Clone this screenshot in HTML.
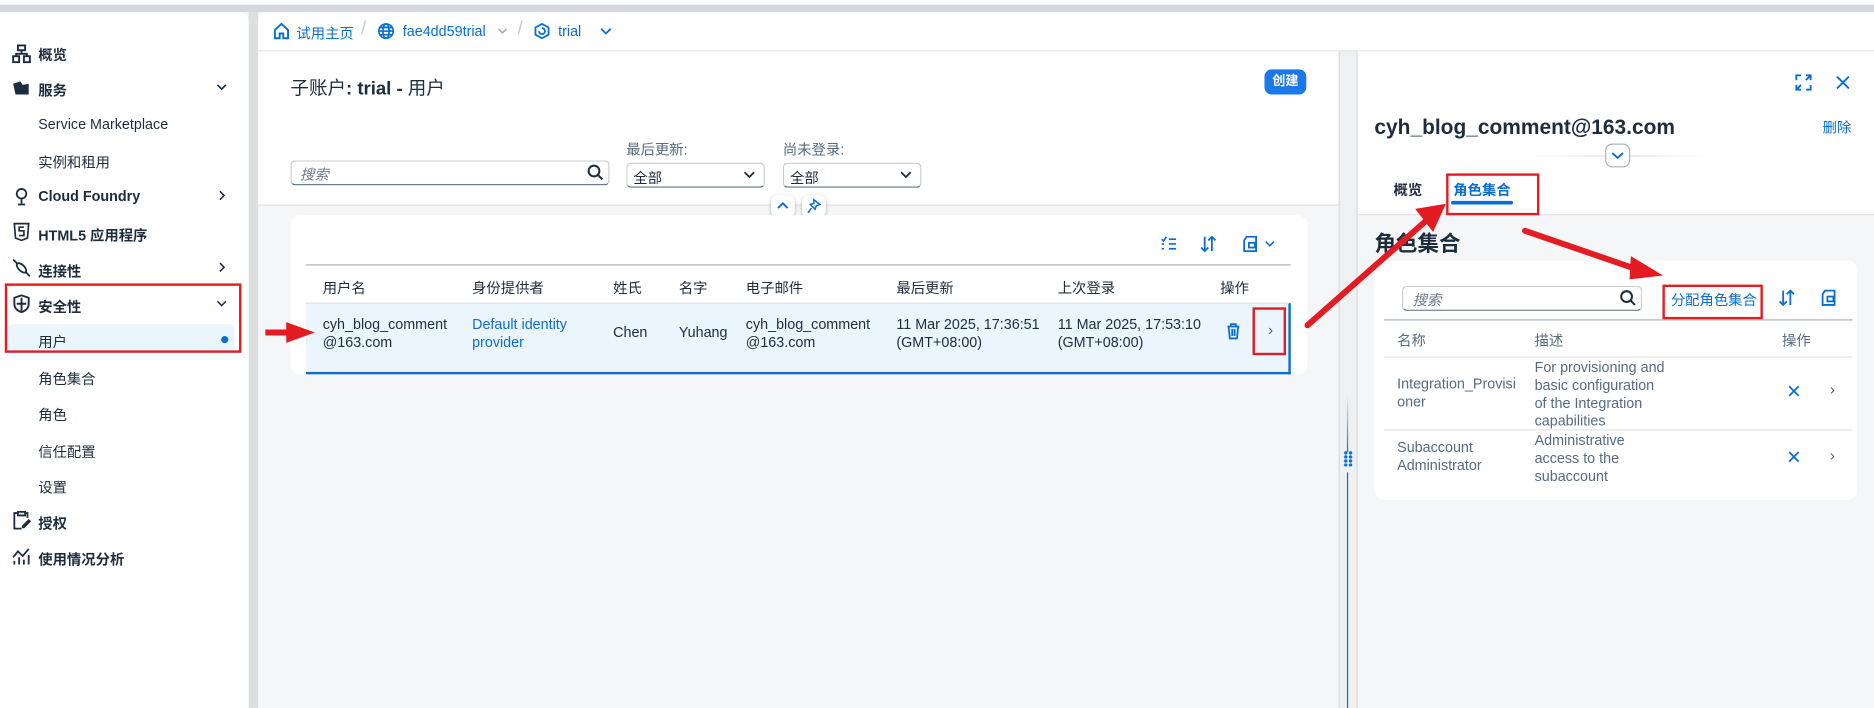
<!DOCTYPE html>
<html><head><meta charset="utf-8"><style>
*{box-sizing:border-box;margin:0;padding:0}
html,body{width:1874px;height:708px;overflow:hidden;background:#f5f6f7}
#w{position:absolute;left:0;top:0;width:1568px;height:592px;transform:scale(1.19515,1.1959);transform-origin:0 0;font-family:"Liberation Sans","Noto Sans CJK SC",sans-serif;font-size:12px;color:#1d2d3e}
.a{position:absolute;white-space:nowrap}
.b{color:#0a6ed1}
.ic{position:absolute}
</style></head><body><div id="w">
<div class="a" style="left:0;top:0;width:1568px;height:4px;background:#fff"></div>
<div class="a" style="left:0;top:4px;width:1568px;height:6px;background:#d5d7da"></div>
<div class="a" style="left:208px;top:10px;width:8px;height:582px;background:#dcdee0"></div>
<!-- sidebar -->
<div class="a" style="left:0;top:10px;width:208px;height:582px;background:#fff;border-top-right-radius:8px"></div>
<svg class="ic" style="left:10px;top:37px" width="16" height="16" viewBox="0 0 16 16" fill="none" stroke="#1d2d3e" stroke-width="1.6"><rect x="5" y="1" width="6" height="4"/><rect x="1" y="10" width="5" height="5"/><rect x="10" y="10" width="5" height="5"/><path d="M8 5v3M3.5 10V8h9v2"/></svg>
<div class="a" style="left:32px;top:37px;font-weight:bold">概览</div>
<svg class="ic" style="left:10px;top:66px" width="16" height="16" viewBox="0 0 16 16"><path d="M1 4l6-2 2 3 5-1v9H3z" fill="#1d2d3e"/></svg>
<div class="a" style="left:32px;top:67px;font-weight:bold">服务</div>
<svg class="ic" style="left:181px;top:70px" width="9" height="6" viewBox="0 0 9 6" fill="none" stroke="#1d2d3e" stroke-width="1.3"><path d="M1 1l3.5 3.5L8 1"/></svg>
<div class="a" style="left:32px;top:97px">Service Marketplace</div>
<div class="a" style="left:32px;top:127px">实例和租用</div>
<svg class="ic" style="left:10px;top:156px" width="16" height="16" viewBox="0 0 16 16" fill="none" stroke="#1d2d3e" stroke-width="1.5"><circle cx="8" cy="6" r="4"/><path d="M8 10v5M5 15h6"/></svg>
<div class="a" style="left:32px;top:157px;font-weight:bold">Cloud Foundry</div>
<svg class="ic" style="left:183px;top:159px" width="6" height="9" viewBox="0 0 6 9" fill="none" stroke="#1d2d3e" stroke-width="1.3"><path d="M1 1l3.5 3.5L1 8"/></svg>
<svg class="ic" style="left:10px;top:186px" width="16" height="16" viewBox="0 0 16 16" fill="none" stroke="#1d2d3e" stroke-width="1.4"><path d="M2 1h12l-1 12-5 2-5-2z"/><path d="M10 4H6v3h4v4H6"/></svg>
<div class="a" style="left:32px;top:188px;font-weight:bold">HTML5 应用程序</div>
<svg class="ic" style="left:10px;top:216px" width="16" height="16" viewBox="0 0 16 16" fill="none" stroke="#1d2d3e" stroke-width="1.5"><path d="M1 1l4 4M15 15l-4-4"/><ellipse cx="8" cy="8" rx="2.5" ry="5" transform="rotate(-45 8 8)"/></svg>
<div class="a" style="left:32px;top:218px;font-weight:bold">连接性</div>
<svg class="ic" style="left:183px;top:219px" width="6" height="9" viewBox="0 0 6 9" fill="none" stroke="#1d2d3e" stroke-width="1.3"><path d="M1 1l3.5 3.5L1 8"/></svg>
<svg class="ic" style="left:10px;top:246px" width="16" height="16" viewBox="0 0 16 16" fill="none" stroke="#1d2d3e" stroke-width="1.6"><path d="M8 1l6 2v5c0 4-3 6-6 7-3-1-6-3-6-7V3z M8 3v11M4 8h8"/></svg>
<div class="a" style="left:32px;top:248px;font-weight:bold">安全性</div>
<svg class="ic" style="left:181px;top:251px" width="9" height="6" viewBox="0 0 9 6" fill="none" stroke="#1d2d3e" stroke-width="1.3"><path d="M1 1l3.5 3.5L8 1"/></svg>
<div class="a" style="left:6px;top:271px;width:190px;height:24px;background:#ebf5fe;border-radius:4px"></div>
<div class="a" style="left:32px;top:277px">用户</div>
<div class="a" style="left:185px;top:281px;width:6px;height:6px;border-radius:3px;background:#0a6ed1"></div>
<div class="a" style="left:4px;top:237px;width:198px;height:58px;border:2px solid #e31b23"></div>
<div class="a" style="left:32px;top:308px">角色集合</div>
<div class="a" style="left:32px;top:338px">角色</div>
<div class="a" style="left:32px;top:369px">信任配置</div>
<div class="a" style="left:32px;top:399px">设置</div>
<svg class="ic" style="left:10px;top:427px" width="16" height="16" viewBox="0 0 16 16" fill="none" stroke="#1d2d3e" stroke-width="1.5"><path d="M5 2H2v13h6M11 2h2v4M5 1h6v3H5z M9 13l5-5 1 1-5 5H9z"/></svg>
<div class="a" style="left:32px;top:429px;font-weight:bold">授权</div>
<svg class="ic" style="left:10px;top:457px" width="16" height="16" viewBox="0 0 16 16" fill="none" stroke="#1d2d3e" stroke-width="1.5"><path d="M1 9l4-5 4 4 5-6M2 12v3M6 9v6M10 11v4M14 7v8"/></svg>
<div class="a" style="left:32px;top:459px;font-weight:bold">使用情况分析</div>

<!-- breadcrumb -->
<div class="a" style="left:216px;top:10px;width:1352px;height:33px;background:#fff;border-bottom:1px solid #e0e2e4;border-top-left-radius:8px"></div>
<svg class="ic" style="left:229px;top:19px" width="13" height="14" viewBox="0 0 13 14" fill="none" stroke="#0a6ed1" stroke-width="1.6"><path d="M1 13V6l5.5-5 5.5 5v7H8V9H5v4z"/></svg>
<div class="a b" style="left:248px;top:19px">试用主页</div>
<div class="a" style="left:302px;top:16px;color:#c5c8cc;font-size:16px">/</div>
<svg class="ic" style="left:316px;top:19px" width="14" height="14" viewBox="0 0 14 14" fill="none" stroke="#0a6ed1" stroke-width="1.4"><circle cx="7" cy="7" r="6"/><ellipse cx="7" cy="7" rx="2.6" ry="6"/><path d="M1 7h12M2 4h10M2 10h10"/></svg>
<div class="a b" style="left:337px;top:19px">fae4dd59trial</div>
<svg class="ic" style="left:416px;top:23px" width="9" height="6" viewBox="0 0 9 6" fill="none" stroke="#a0a8b0" stroke-width="1.2"><path d="M1 1l3.5 3.5L8 1"/></svg>
<div class="a" style="left:433px;top:16px;color:#c5c8cc;font-size:16px">/</div>
<svg class="ic" style="left:447px;top:19px" width="13" height="14" viewBox="0 0 13 14" fill="none" stroke="#0a6ed1" stroke-width="1.5"><path d="M6.5 1l5.5 3v6l-5.5 3L1 10V4z"/><path d="M4 7a2.5 2.5 0 1 0 2.5-2.5"/></svg>
<div class="a b" style="left:467px;top:19px">trial</div>
<svg class="ic" style="left:502px;top:23px" width="10" height="7" viewBox="0 0 10 7" fill="none" stroke="#0a6ed1" stroke-width="1.5"><path d="M1 1l4 4 4-4"/></svg>

<!-- main header -->
<div class="a" style="left:216px;top:43px;width:904px;height:129px;background:#fff;border-bottom:1px solid #e0e2e4"></div>
<div class="a" style="left:243px;top:62px;font-size:15.5px">子账户<b>: trial -</b> 用户</div>
<div class="a" style="left:1058px;top:58px;width:35px;height:21px;background:#1b78e8;border-radius:6px;color:#fff;font-size:11px;text-align:center;line-height:21px;font-weight:bold">创建</div>
<div class="a" style="left:243px;top:134px;width:267px;height:21px;border:1px solid #c8ccd0;border-bottom:1px solid #556b82;border-radius:4px;background:#fff"></div>
<div class="a" style="left:251px;top:137px;color:#6a7a8c;font-style:italic">搜索</div>
<svg class="ic" style="left:491px;top:137px" width="14" height="14" viewBox="0 0 14 14" fill="none" stroke="#1d2d3e" stroke-width="1.7"><circle cx="6" cy="6" r="4.5"/><path d="M9.5 9.5l3.5 3.5"/></svg>
<div class="a" style="left:524px;top:116px;color:#556b82">最后更新:</div>
<div class="a" style="left:655px;top:116px;color:#556b82">尚未登录:</div>
<div class="a" style="left:524px;top:136px;width:116px;height:21px;border:1px solid #c8ccd0;border-bottom:1px solid #556b82;border-radius:4px;background:#fff"></div>
<div class="a" style="left:530px;top:140px">全部</div>
<svg class="ic" style="left:622px;top:143px" width="10" height="7" viewBox="0 0 10 7" fill="none" stroke="#1d2d3e" stroke-width="1.5"><path d="M1 1l4 4 4-4"/></svg>
<div class="a" style="left:655px;top:136px;width:116px;height:21px;border:1px solid #c8ccd0;border-bottom:1px solid #556b82;border-radius:4px;background:#fff"></div>
<div class="a" style="left:661px;top:140px">全部</div>
<svg class="ic" style="left:753px;top:143px" width="10" height="7" viewBox="0 0 10 7" fill="none" stroke="#1d2d3e" stroke-width="1.5"><path d="M1 1l4 4 4-4"/></svg>
<div class="a" style="left:645px;top:163px;width:20px;height:19px;background:#fff;border-radius:6px;box-shadow:0 1px 3px rgba(0,0,0,.3)"></div>
<svg class="ic" style="left:650px;top:168px" width="10" height="8" viewBox="0 0 10 8" fill="none" stroke="#0a6ed1" stroke-width="1.6"><path d="M1 6l4-4 4 4"/></svg>
<div class="a" style="left:671px;top:163px;width:20px;height:19px;background:#fff;border-radius:6px;box-shadow:0 1px 3px rgba(0,0,0,.3)"></div>
<svg class="ic" style="left:675px;top:166px" width="12" height="13" viewBox="0 0 12 13" fill="none" stroke="#0a6ed1" stroke-width="1.3"><path d="M6 1l5 4-3 1-1 3-4-4 3-1z M4 8l-3 4"/></svg>

<!-- table card -->
<div class="a" style="left:243px;top:180px;width:851px;height:133px;background:#fff;border-radius:8px"></div>
<svg class="ic" style="left:971px;top:197px" width="14" height="14" viewBox="0 0 14 14" fill="none" stroke="#0a6ed1" stroke-width="1.4"><path d="M1 3l1.5 1.5L5 1M7 3h6M1 7h2M7 7h6M1 11h2M7 11h6"/></svg>
<svg class="ic" style="left:1004px;top:197px" width="14" height="14" viewBox="0 0 14 14" fill="none" stroke="#0a6ed1" stroke-width="1.5"><path d="M4 1v12M1 10l3 3 3-3M10 13V1M7 4l3-3 3 3"/></svg>
<svg class="ic" style="left:1038px;top:197px" width="14" height="14" viewBox="0 0 14 14" fill="none" stroke="#0a6ed1" stroke-width="1.5"><path d="M5 1h8v12H3V4z"/><rect x="7" y="6" width="5" height="4"/></svg>
<svg class="ic" style="left:1058px;top:201px" width="9" height="6" viewBox="0 0 9 6" fill="none" stroke="#0a6ed1" stroke-width="1.3"><path d="M1 1l3.5 3.5L8 1"/></svg>
<div class="a" style="left:256px;top:221px;width:824px;height:1px;background:#a9b4be"></div>
<div class="a" style="left:270px;top:232px">用户名</div>
<div class="a" style="left:395px;top:232px">身份提供者</div>
<div class="a" style="left:513px;top:232px">姓氏</div>
<div class="a" style="left:568px;top:232px">名字</div>
<div class="a" style="left:624px;top:232px">电子邮件</div>
<div class="a" style="left:750px;top:232px">最后更新</div>
<div class="a" style="left:885px;top:232px">上次登录</div>
<div class="a" style="left:1021px;top:232px">操作</div>
<div class="a" style="left:256px;top:253px;width:824px;height:60px;background:#eaf5fe;border-top:1px solid #e0e2e4;border-bottom:2px solid #0a6ed1;border-right:2px solid #0a6ed1"></div>
<div class="a" style="left:270px;top:264px;line-height:15px">cyh_blog_comment<br>@163.com</div>
<div class="a b" style="left:395px;top:264px;line-height:15px">Default identity<br>provider</div>
<div class="a" style="left:513px;top:271px">Chen</div>
<div class="a" style="left:568px;top:271px">Yuhang</div>
<div class="a" style="left:624px;top:264px;line-height:15px">cyh_blog_comment<br>@163.com</div>
<div class="a" style="left:750px;top:264px;line-height:15px">11 Mar 2025, 17:36:51<br>(GMT+08:00)</div>
<div class="a" style="left:885px;top:264px;line-height:15px">11 Mar 2025, 17:53:10<br>(GMT+08:00)</div>
<svg class="ic" style="left:1026px;top:270px" width="12" height="14" viewBox="0 0 12 14" fill="none" stroke="#0a6ed1" stroke-width="1.5"><path d="M1 3h10M4 3V1h4v2M2 3l1 10h6l1-10M5 5v6M7 5v6"/></svg>
<div class="a" style="left:1061px;top:268px;color:#556b82;font-size:13px">›</div>
<div class="a" style="left:1048px;top:257px;width:28px;height:40px;border:2px solid #e31b23"></div>

<!-- divider -->
<div class="a" style="left:1120px;top:43px;width:16px;height:549px;background:#eef0f2;border-left:1px solid #d8dadc;border-right:1px solid #d8dadc"></div>
<div class="a" style="left:1127px;top:330px;width:1px;height:48px;background:linear-gradient(#eef0f2,#0a6ed1)"></div>
<div class="a" style="left:1124px;top:377px;width:8px;height:13px;background:radial-gradient(circle,#0a6ed1 1.3px,transparent 1.6px) 0 0/4px 3.4px"></div>
<div class="a" style="left:1127px;top:395px;width:1px;height:197px;background:#0a6ed1"></div>

<!-- right panel -->
<div class="a" style="left:1136px;top:43px;width:432px;height:137px;background:#fff;border-bottom:1px solid #e0e2e4"></div>
<svg class="ic" style="left:1502px;top:62px" width="14" height="14" viewBox="0 0 14 14" fill="none" stroke="#0a6ed1" stroke-width="1.6"><path d="M1 5V1h4M9 1h4v4M13 9v4H9M5 13H1V9M9 5l4-4M5 9l-4 4"/></svg>
<svg class="ic" style="left:1536px;top:63px" width="12" height="12" viewBox="0 0 12 12" stroke="#0a6ed1" stroke-width="1.6"><path d="M1 1l10 10M11 1L1 11"/></svg>
<div class="a" style="left:1150px;top:96px;font-size:17.5px;font-weight:bold">cyh_blog_comment@163.com</div>
<div class="a b" style="left:1525px;top:98px">删除</div>
<div class="a" style="left:1280px;top:130px;width:150px;height:1px;background:linear-gradient(90deg,transparent,#d8dadc,transparent)"></div>
<div class="a" style="left:1343px;top:120px;width:21px;height:20px;background:#fff;border:1px solid #a9b4be;border-radius:6px"></div>
<svg class="ic" style="left:1348px;top:126px" width="11" height="8" viewBox="0 0 11 8" fill="none" stroke="#0a6ed1" stroke-width="1.6"><path d="M1 2l4.5 4L10 2"/></svg>
<div class="a" style="left:1166px;top:150px;font-weight:bold;color:#1d2d3e">概览</div>
<div class="a b" style="left:1216px;top:150px;font-weight:bold">角色集合</div>
<div class="a" style="left:1214px;top:168px;width:52px;height:3px;background:#0a6ed1;border-radius:2px"></div>
<div class="a" style="left:1210px;top:145px;width:78px;height:35px;border:2px solid #e31b23"></div>
<div class="a" style="left:1150px;top:190px;font-size:18px;font-weight:bold">角色集合</div>
<div class="a" style="left:1150px;top:218px;width:404px;height:200px;background:#fff;border-radius:8px"></div>
<div class="a" style="left:1173px;top:239px;width:201px;height:21px;border:1px solid #c8ccd0;border-bottom:1px solid #556b82;border-radius:4px;background:#fff"></div>
<div class="a" style="left:1182px;top:242px;color:#6a7a8c;font-style:italic">搜索</div>
<svg class="ic" style="left:1355px;top:242px" width="14" height="14" viewBox="0 0 14 14" fill="none" stroke="#1d2d3e" stroke-width="1.7"><circle cx="6" cy="6" r="4.5"/><path d="M9.5 9.5l3.5 3.5"/></svg>
<div class="a b" style="left:1398px;top:242px">分配角色集合</div>
<div class="a" style="left:1391px;top:238px;width:84px;height:29px;border:2px solid #e31b23"></div>
<svg class="ic" style="left:1488px;top:242px" width="14" height="14" viewBox="0 0 14 14" fill="none" stroke="#0a6ed1" stroke-width="1.5"><path d="M4 1v12M1 10l3 3 3-3M10 13V1M7 4l3-3 3 3"/></svg>
<svg class="ic" style="left:1522px;top:242px" width="14" height="14" viewBox="0 0 14 14" fill="none" stroke="#0a6ed1" stroke-width="1.5"><path d="M5 1h8v12H3V4z"/><rect x="7" y="6" width="5" height="4"/></svg>
<div class="a" style="left:1158px;top:267px;width:392px;height:1px;background:#a9b4be"></div>
<div class="a" style="left:1169px;top:276px;color:#556b82">名称</div>
<div class="a" style="left:1284px;top:276px;color:#556b82">描述</div>
<div class="a" style="left:1491px;top:276px;color:#556b82">操作</div>
<div class="a" style="left:1158px;top:298px;width:392px;height:1px;background:#e0e2e4"></div>
<div class="a" style="left:1169px;top:314px;line-height:15px;color:#556b82">Integration_Provisi<br>oner</div>
<div class="a" style="left:1284px;top:300px;line-height:15px;color:#556b82">For provisioning and<br>basic configuration<br>of the Integration<br>capabilities</div>
<svg class="ic" style="left:1496px;top:322px" width="10" height="10" viewBox="0 0 10 10" stroke="#0a6ed1" stroke-width="1.5"><path d="M1 1l8 8M9 1L1 9"/></svg>
<div class="a" style="left:1531px;top:318px;color:#556b82;font-size:13px">›</div>
<div class="a" style="left:1158px;top:359px;width:392px;height:1px;background:#e0e2e4"></div>
<div class="a" style="left:1169px;top:367px;line-height:15px;color:#556b82">Subaccount<br>Administrator</div>
<div class="a" style="left:1284px;top:361px;line-height:15px;color:#556b82">Administrative<br>access to the<br>subaccount</div>
<svg class="ic" style="left:1496px;top:377px" width="10" height="10" viewBox="0 0 10 10" stroke="#0a6ed1" stroke-width="1.5"><path d="M1 1l8 8M9 1L1 9"/></svg>
<div class="a" style="left:1531px;top:373px;color:#556b82;font-size:13px">›</div>

<!-- red arrows -->
<svg class="ic" style="left:0;top:0" width="1568" height="592" viewBox="0 0 1568 592">
<g fill="#e31b23" stroke="#e31b23">
<path d="M222 278h22" stroke-width="5"/><path d="M240 270l22 8-22 8z"/>
<path d="M1094 272L1195 183" stroke-width="5" stroke-linecap="round"/><path d="M1185 175l24-4-10 22z"/>
<path d="M1276 193L1372 226" stroke-width="5" stroke-linecap="round"/><path d="M1365 215l25 15-26 3z"/>
</g></svg>
</div></body></html>
